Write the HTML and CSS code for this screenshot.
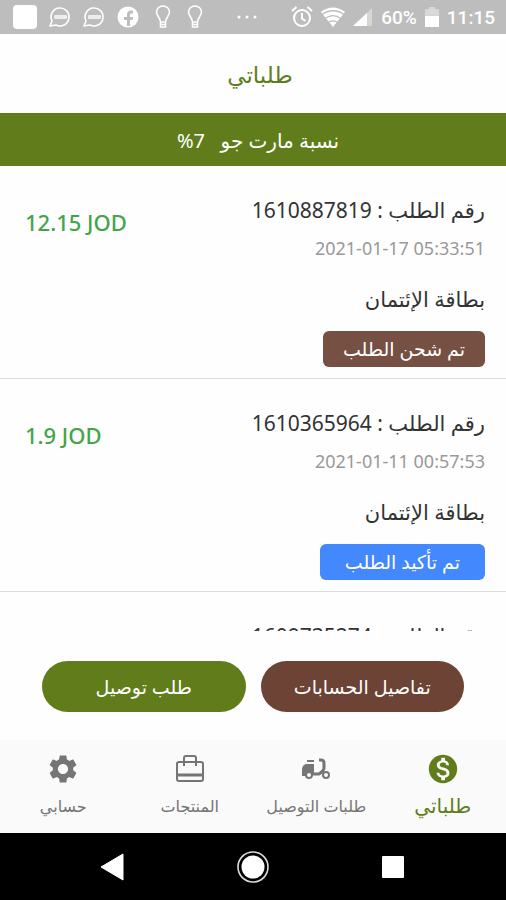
FILE: index.html
```html
<!DOCTYPE html>
<html lang="ar" dir="rtl">
<head>
    <meta charset="UTF-8">
    <meta name="viewport" content="width=device-width, initial-scale=1.0">
    <title>طلباتي</title>
    <link rel="stylesheet" href="styles.css">
</head>
<body>
    <!-- Status bar -->
    <div class="status-bar" dir="ltr">
        <div class="status-group notifications">
            <svg width="24" height="24" viewBox="0 0 24 24"><rect width="24" height="24" rx="4" fill="#fff"/></svg>
            <svg width="22" height="22" viewBox="0 0 22 22"><path d="M1 20l2-5a9 9 0 1 1 4 4z" fill="none" stroke="#fff" stroke-width="1.600" stroke-linejoin="round"/><rect x="5" y="9" width="13" height="4" rx="1" fill="#eee"/></svg>
            <svg width="22" height="22" viewBox="0 0 22 22"><path d="M1 20l2-5a9 9 0 1 1 4 4z" fill="none" stroke="#fff" stroke-width="1.600" stroke-linejoin="round"/><rect x="5" y="9" width="13" height="4" rx="1" fill="#eee"/></svg>
            <svg width="22" height="22" viewBox="0 0 22 22"><circle cx="11" cy="11" r="10.500" fill="#fff"/><path d="M10 20v-6H7v-3h3V9c0-3 1.500-4.500 4-4.500h2V7.500h-1.500c-1 0-1.500.5-1.500 1.500v2h3l-.5 3H13v6z" fill="#bdbdbd"/></svg>
            <svg width="16" height="24" viewBox="0 0 16 24"><path d="M5.500 17c0-4-4-6-4-10a6.500 6 0 0 1 13 0c0 4-4 6-4 10zM5.500 17v5h5v-5M5.500 19.500h5" fill="none" stroke="#fff" stroke-width="1.600"/></svg>
            <svg width="16" height="24" viewBox="0 0 16 24"><path d="M5.500 17c0-4-4-6-4-10a6.500 6 0 0 1 13 0c0 4-4 6-4 10zM5.500 17v5h5v-5M5.500 19.500h5" fill="none" stroke="#fff" stroke-width="1.600"/></svg>
        </div>
        <svg width="20" height="4" viewBox="0 0 20 4" fill="#fff"><circle cx="2" cy="2" r="1.500"/><circle cx="10" cy="2" r="1.500"/><circle cx="18" cy="2" r="1.500"/></svg>
        <div class="status-group system">
            <svg width="22" height="22" viewBox="0 0 22 22" fill="none" stroke="#fff" stroke-width="2"><circle cx="11" cy="12" r="8"/><path d="M11 7v5.500l3.500 2.500M1 5l4.500-4M21 5l-4.500-4"/></svg>
            <svg width="24" height="20" viewBox="0 0 24 20"><path d="M12 20L0 5C7-1 17-1 24 5z" fill="#fff"/><path d="M1 7.500c6.500-5 15.500-5 22 0M4 11.500c5-3.500 11-3.500 16 0M7 15.500c3-2 7-2 10 0" fill="none" stroke="#bdbdbd" stroke-width="1.300"/></svg>
            <svg width="20" height="18" viewBox="0 0 20 18"><path d="M0 18L19 0v18z" fill="#d6d6d6"/><path d="M0 18L14 5v13z" fill="#fff"/></svg>
            <span class="battery-level">60%</span>
            <svg width="14" height="20" viewBox="0 0 14 20"><path d="M4 0h6v2h4v8H0V2h4z" fill="#d8d8d8"/><path d="M0 9h14v11H0z" fill="#fff"/></svg>
            <span class="clock">11:15</span>
        </div>
    </div>

    <header class="header">
        <h1>طلباتي</h1>
    </header>

    <div class="rate-strip">نسبة مارت جو &nbsp; 7%</div>

    <!-- Orders -->
    <main class="orders">
        <article class="order">
            <div class="order-info">
                <h2 class="order-number">رقم الطلب : 1610887819</h2>
                <time class="order-date" dir="ltr">2021-01-17 05:33:51</time>
                <p class="payment">بطاقة الإئتمان</p>
                <span class="badge shipped">تم شحن الطلب</span>
            </div>
            <div class="amount" dir="ltr">12.15 JOD</div>
        </article>
        <article class="order">
            <div class="order-info">
                <h2 class="order-number">رقم الطلب : 1610365964</h2>
                <time class="order-date" dir="ltr">2021-01-11 00:57:53</time>
                <p class="payment">بطاقة الإئتمان</p>
                <span class="badge confirmed">تم تأكيد الطلب</span>
            </div>
            <div class="amount" dir="ltr">1.9 JOD</div>
        </article>
        <article class="order">
            <div class="order-info">
                <h2 class="order-number">رقم الطلب : 1609735274</h2>
            </div>
        </article>
    </main>

    <div class="actions">
        <button type="button" class="action accounts">تفاصيل الحسابات</button>
        <button type="button" class="action delivery">طلب توصيل</button>
    </div>

    <!-- Tabs -->
    <nav class="tabs">
        <a href="#orders" class="tab active">
            <svg width="34" height="34" viewBox="0 0 24 24" fill="currentColor"><path d="M12 2C6.480 2 2 6.480 2 12s4.480 10 10 10 10-4.480 10-10S17.520 2 12 2zm1.410 16.090V20h-2.670v-1.930c-1.710-.36-3.160-1.460-3.270-3.400h1.960c.1 1.050.82 1.870 2.650 1.870 1.960 0 2.400-.98 2.400-1.590 0-.83-.44-1.610-2.670-2.140-2.480-.6-4.180-1.620-4.180-3.670 0-1.720 1.390-2.840 3.110-3.210V4h2.670v1.950c1.860.45 2.790 1.860 2.850 3.390H14.300c-.05-1.110-.64-1.870-2.220-1.870-1.500 0-2.400.68-2.400 1.640 0 .84.65 1.390 2.670 1.910s4.180 1.390 4.180 3.910c-.01 1.830-1.380 2.830-3.120 3.160z"/></svg>
            <span>طلباتي</span>
        </a>
        <a href="#deliveries" class="tab">
            <svg width="34" height="34" viewBox="0 0 34 34"><path d="M8 8h7v2H8z" fill="currentColor"/><path d="M7 12h8v9h-2v3H3v-5c0-4 1-6 4-7z" fill="currentColor"/><path d="M13 22h7c3-2 5-4 5-6V11q0-3-3-3h-2" fill="none" stroke="currentColor" stroke-width="3"/><circle cx="10" cy="23" r="3" fill="#fafafa" stroke="currentColor" stroke-width="2"/><circle cx="27" cy="23" r="3" fill="#fafafa" stroke="currentColor" stroke-width="2"/></svg>
            <span>طلبات التوصيل</span>
        </a>
        <a href="#products" class="tab">
            <svg width="34" height="34" viewBox="0 0 34 34" fill="none" stroke="currentColor" stroke-width="2"><rect x="4" y="10" width="26" height="19" rx="2"/><path d="M11 14V6q0-2 2-2h8q2 0 2 2v8"/><path d="M4 23h26" stroke-width="3"/></svg>
            <span>المنتجات</span>
        </a>
        <a href="#account" class="tab">
            <svg width="34" height="34" viewBox="0 0 24 24" fill="currentColor"><path d="M19.140 12.940c.04-.3.06-.61.06-.94 0-.32-.02-.64-.07-.94l2.030-1.580c.18-.14.23-.41.12-.61l-1.920-3.320c-.12-.22-.37-.29-.59-.22l-2.390.96c-.5-.38-1.030-.7-1.620-.94l-.36-2.540c-.04-.24-.24-.41-.48-.41h-3.840c-.24 0-.43.17-.47.41l-.36 2.540c-.59.24-1.130.57-1.620.94l-2.390-.96c-.22-.08-.47 0-.59.22L2.740 8.870c-.12.21-.08.47.12.61l2.030 1.580c-.05.3-.09.63-.09.94s.02.64.07.94l-2.030 1.580c-.18.14-.23.41-.12.61l1.920 3.320c.12.22.37.29.59.22l2.390-.96c.5.38 1.030.7 1.620.94l.36 2.540c.05.24.24.41.48.41h3.840c.24 0 .44-.17.47-.41l.36-2.540c.59-.24 1.130-.56 1.620-.94l2.390.96c.22.08.47 0 .59-.22l1.920-3.320c.12-.22.07-.47-.12-.61l-2.010-1.580zM12 15.600c-1.980 0-3.600-1.620-3.600-3.600s1.620-3.600 3.600-3.600 3.600 1.620 3.600 3.600-1.620 3.600-3.600 3.600z"/></svg>
            <span>حسابي</span>
        </a>
    </nav>

    <!-- System buttons -->
    <div class="system-nav" dir="ltr">
        <button type="button" aria-label="رجوع"><svg width="34" height="34" viewBox="0 0 34 34"><path d="M5 17L27 4v26z" fill="#fff" stroke="#fff" stroke-linejoin="round"/></svg></button>
        <button type="button" aria-label="الرئيسية"><svg width="34" height="34" viewBox="0 0 34 34"><circle cx="17" cy="17" r="11.500" fill="#fff"/><circle cx="17" cy="17" r="15" fill="none" stroke="#ddd" stroke-width="1.600"/></svg></button>
        <button type="button" aria-label="التطبيقات"><svg width="34" height="34" viewBox="0 0 34 34"><rect x="6" y="6" width="22" height="22" rx="1" fill="#fff"/></svg></button>
    </div>
</body>
</html>
```
FILE: styles.css
```css
* {
    box-sizing: border-box;
}

body {
    display: flex;
    flex-direction: column;
    height: 100vh;
    margin: 0;
    font-family: "Noto Sans", "DejaVu Sans", sans-serif;
    background-color: #fefefe;
    color: #333;
}

h1, h2, p {
    margin: 0;
    font-weight: normal;
}

svg {
    display: block;
    flex-shrink: 0;
}

.status-bar {
    display: flex;
    justify-content: space-between;
    align-items: center;
    height: 34px;
    padding: 0 11px 0 13px;
    background-color: #bdbdbd;
    color: #fff;
    font-family: Roboto, sans-serif;
    font-size: 19px;
    font-weight: 500;
}

.status-group {
    display: flex;
    align-items: center;
}

.notifications {
    gap: 12px;
}

.notifications svg:nth-child(n+5) {
    margin-left: 4px;
}

.system {
    gap: 8px;
}

.header {
    display: flex;
    align-items: center;
    justify-content: center;
    height: 79px;
    padding-left: 14px;
    color: #617d1b;
}

h1 {
    font-size: 23px;
}

.rate-strip {
    height: 53px;
    line-height: 56px;
    padding-left: 10px;
    background-color: #617d1b;
    color: #fff;
    font-size: 20px;
    text-align: center;
}

.orders {
    flex: 1;
    min-height: 0;
    overflow: hidden;
}

.order {
    display: flex;
    justify-content: space-between;
    padding: 26px 21px 11px 25px;
    border-bottom: 1px solid #ddd;
}

.order-info {
    display: flex;
    flex-direction: column;
    align-items: flex-start;
}

.order-number {
    font-size: 21px;
    line-height: 36px;
}

.order-date {
    color: #999;
    font-size: 18px;
    line-height: 40px;
}

.payment {
    margin: 13px 0 14px;
    font-size: 21px;
    line-height: 36px;
}

.badge {
    height: 36px;
    padding: 0 20px;
    border-radius: 6px;
    color: #fff;
    font-size: 19px;
    line-height: 36px;
}

.shipped {
    background-color: #755043;
}

.confirmed {
    padding: 0 25px;
    background-color: #4388fd;
}

.amount {
    color: #43a54a;
    font-size: 22px;
    font-weight: 500;
    line-height: 60px;
}

.actions {
    display: flex;
    gap: 15px;
    padding: 30px 42px 28px;
}

.action {
    flex: 1;
    height: 51px;
    padding: 0;
    border: none;
    border-radius: 26px;
    color: #fff;
    font-family: inherit;
    font-size: 19px;
    cursor: pointer;
}

.accounts {
    background-color: #6c4335;
}

.delivery {
    background-color: #617d1b;
}

.tabs {
    display: flex;
    height: 93px;
    padding-top: 12px;
    background-color: #fafafa;
}

.tab {
    display: flex;
    flex: 1;
    flex-direction: column;
    align-items: center;
    gap: 6px;
    color: #757575;
    font-size: 16px;
    line-height: 28px;
    white-space: nowrap;
    text-decoration: none;
}

.tab.active {
    color: #617d1b;
    font-size: 20px;
}

.system-nav {
    display: flex;
    justify-content: center;
    align-items: center;
    gap: 106px;
    height: 67px;
    background-color: #000;
}

.system-nav button {
    padding: 0;
    border: none;
    background: none;
    cursor: pointer;
}
```
